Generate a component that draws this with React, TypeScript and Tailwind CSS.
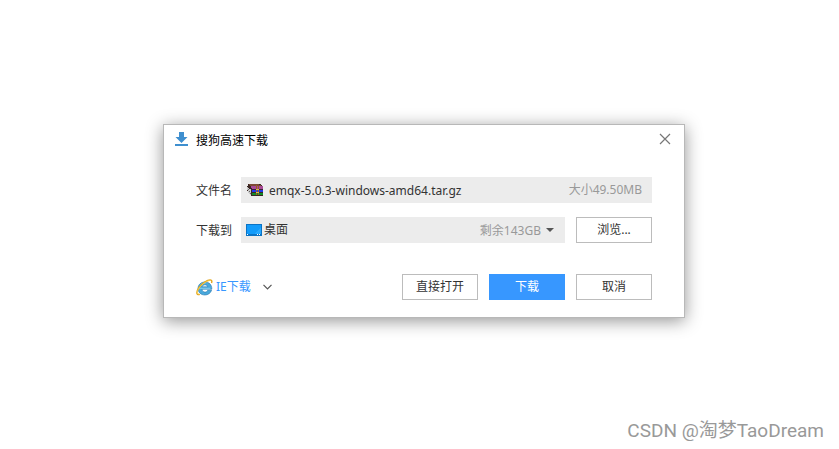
import type { ReactNode } from "react";

function DownloadIcon() {
  return (
    <svg width="14" height="14" viewBox="0 0 14 14" fill="#3f8fcf" aria-hidden="true">
      <path d="M4 0h5v5h3.5L6.5 11 .5 5H4z" />
      <path d="M0 12h13v2H0z" />
    </svg>
  );
}

function CloseIcon() {
  return (
    <svg width="12" height="12" viewBox="0 0 12 12" fill="none" stroke="#777" strokeWidth="1.2" aria-hidden="true">
      <path d="M1 1l10 10M11 1L1 11" />
    </svg>
  );
}

function ArchiveIcon() {
  return (
    <svg width="17" height="12" viewBox="0 0 17 12" shapeRendering="crispEdges" aria-hidden="true">
      <path d="M1 0h13v1h1v1h1v10H4v-1H3v-1H2V9H1V7H0V2h1z" fill="#3a2622" />
      <path d="M2 0h10v1H2zM3 1h11v1H3z" fill="#7c4a35" />
      <path d="M0 3h1v1h1v1h2v6H3v-1H2V9H1V6H0z" fill="#c9c9c9" />
      <path d="M1 5h1v1H1zM2 7h1v1H2zM3 9h1v1H3z" fill="#666" />
      <path d="M4 2h12v3H5V4H4z" fill="#a84a98" />
      <path d="M4 4h1v1h11v1H4z" fill="#3a2038" />
      <path d="M5 6h11v2H5z" fill="#2038e8" />
      <path d="M5 9h11v2H5z" fill="#108c26" />
      <path d="M9 1h1v10H9zM11 2h1v9h-1z" fill="#9b5d28" />
      <path d="M9 5h3v1H9zM9 8h3v1H9z" fill="#d8bd4c" />
    </svg>
  );
}

function DesktopIcon() {
  return (
    <svg width="16" height="12" viewBox="0 0 16 12" shapeRendering="crispEdges" aria-hidden="true">
      <path d="M0 0h16v12H0z" fill="#0b73c4" />
      <path d="M1 1h14v9H1z" fill="#129bfa" />
      <path d="M8 10l7-7v7z" fill="#26a8ff" />
      <path d="M1 10h1v1H1zM11 10h1v1h-1zM13 10h1v1h-1z" fill="#fff" />
    </svg>
  );
}

function BrowserIcon() {
  return (
    <svg width="17" height="17" viewBox="0 0 17 17" fill="none" aria-hidden="true">
      <path
        d="M15.600 11.300C14.600 14.200 12 16 8.900 16 4.900 16 2 13.200 2 9.500S5 3 8.900 3c4.200 0 7.100 2.800 6.900 7.200H6c.2 1.900 1.400 2.900 3.100 2.900 1.200 0 2.100-.6 2.600-1.800zM6 7.800h5.700C11.400 6.500 10.400 5.800 8.900 5.800S6.400 6.500 6 7.800z"
        fill="#49a9dc"
        stroke="#2476ad"
        strokeWidth=".6"
      />
      <path d="M4.500 6C5.800 4.400 7.500 3.900 9.500 4M3.200 9.300h11.200" stroke="#8ed5f2" strokeWidth=".9" />
      <path d="M3.800 15.400C-.2 16.400.3 12.600 2.700 9 5.700 4.500 11.500.6 14.900 1.100c1.300.3 1 1.900.6 2.900" stroke="#e0a51c" strokeWidth="1.400" />
      <path d="M3 15C.4 15.200 1 12 3.200 9 6 5 11.600 1.200 14.600 1.400" stroke="#ffd95a" strokeWidth=".7" />
    </svg>
  );
}

function ActionButton({ children, primary = false }: { children: ReactNode; primary?: boolean }) {
  const tone = primary ? "border-[#3797ff] bg-[#3797ff] text-white" : "border-[#bcbcbc] bg-white text-[#333]";
  return (
    <button type="button" className={`h-[26px] w-[76px] shrink-0 border text-center leading-4 ${tone}`}>
      {children}
    </button>
  );
}

export default function App() {
  return (
    <main className="flex min-h-screen flex-col bg-white pt-[124px] font-['Noto_Sans','Noto_Sans_CJK_SC',sans-serif] text-xs text-[#333]">
      <div className="flex justify-center pl-[9px]">
        <section
          role="dialog"
          aria-labelledby="dialog-title"
          className="w-full max-w-[522px] border border-[#b8b8b8] bg-white pb-[17px] shadow-[0_3px_16px_rgba(0,0,0,0.42)]"
        >
          <header className="flex h-7 items-center pr-[13px] pl-[11px]">
            <DownloadIcon />
            <h1 id="dialog-title" className="ml-[7px] flex-1 pt-1 leading-4 text-black">搜狗高速下载</h1>
            <button type="button" aria-label="关闭"><CloseIcon /></button>
          </header>

          <form className="px-8 pt-6">
            <div className="flex items-center">
              <label htmlFor="file-name" className="w-[45px] shrink-0 pt-0.5 leading-4">文件名</label>
              <div className="flex h-[26px] min-w-0 flex-1 items-center bg-[#ececec] pr-2.5 pl-1.5">
                <ArchiveIcon />
                <input
                  id="file-name"
                  defaultValue="emqx-5.0.3-windows-amd64.tar.gz"
                  className="ml-[5px] h-5 min-w-0 flex-1 bg-transparent outline-none"
                />
                <span className="leading-4 text-[#999]">大小49.50MB</span>
              </div>
            </div>

            <div className="mt-3.5 flex items-center">
              <label htmlFor="folder" className="w-[45px] shrink-0 pt-0.5 leading-4">下载到</label>
              <div className="mr-[11px] grid h-[26px] min-w-0 flex-1 grid-cols-1 items-center bg-[#ececec]">
                <select id="folder" className="col-start-1 row-start-1 h-[26px] w-full appearance-none bg-transparent pl-[23px] outline-none">
                  <option>桌面</option>
                </select>
                <div className="pointer-events-none col-start-1 row-start-1 flex items-center pr-2.5 pl-[5px]">
                  <DesktopIcon />
                  <span className="ml-auto pt-0.5 leading-4 text-[#999]">剩余143GB</span>
                  <svg className="ml-1" width="10" height="5" viewBox="0 0 10 5" fill="#555" aria-hidden="true">
                    <path d="M1 0h8L5 4z" />
                  </svg>
                </div>
              </div>
              <ActionButton>浏览...</ActionButton>
            </div>

            <div className="mt-[31px] flex items-center gap-[11px]">
              <button type="button" className="mr-auto flex items-center text-[#3797ff]">
                <BrowserIcon />
                <span className="ml-[3px] leading-4">IE下载</span>
                <svg className="ml-3" width="9" height="6" viewBox="0 0 9 6" fill="none" stroke="#555" strokeWidth="1.2" aria-hidden="true">
                  <path d="M.5.8l4 4 4-4" />
                </svg>
              </button>
              <ActionButton>直接打开</ActionButton>
              <ActionButton primary>下载</ActionButton>
              <ActionButton>取消</ActionButton>
            </div>
          </form>
        </section>
      </div>
      <footer className="mt-auto pr-[15px] pb-1 text-right font-[Roboto,'Noto_Sans_CJK_SC',sans-serif] text-[19px] leading-7 text-[#999]">
        CSDN @淘梦TaoDream
      </footer>
    </main>
  );
}
